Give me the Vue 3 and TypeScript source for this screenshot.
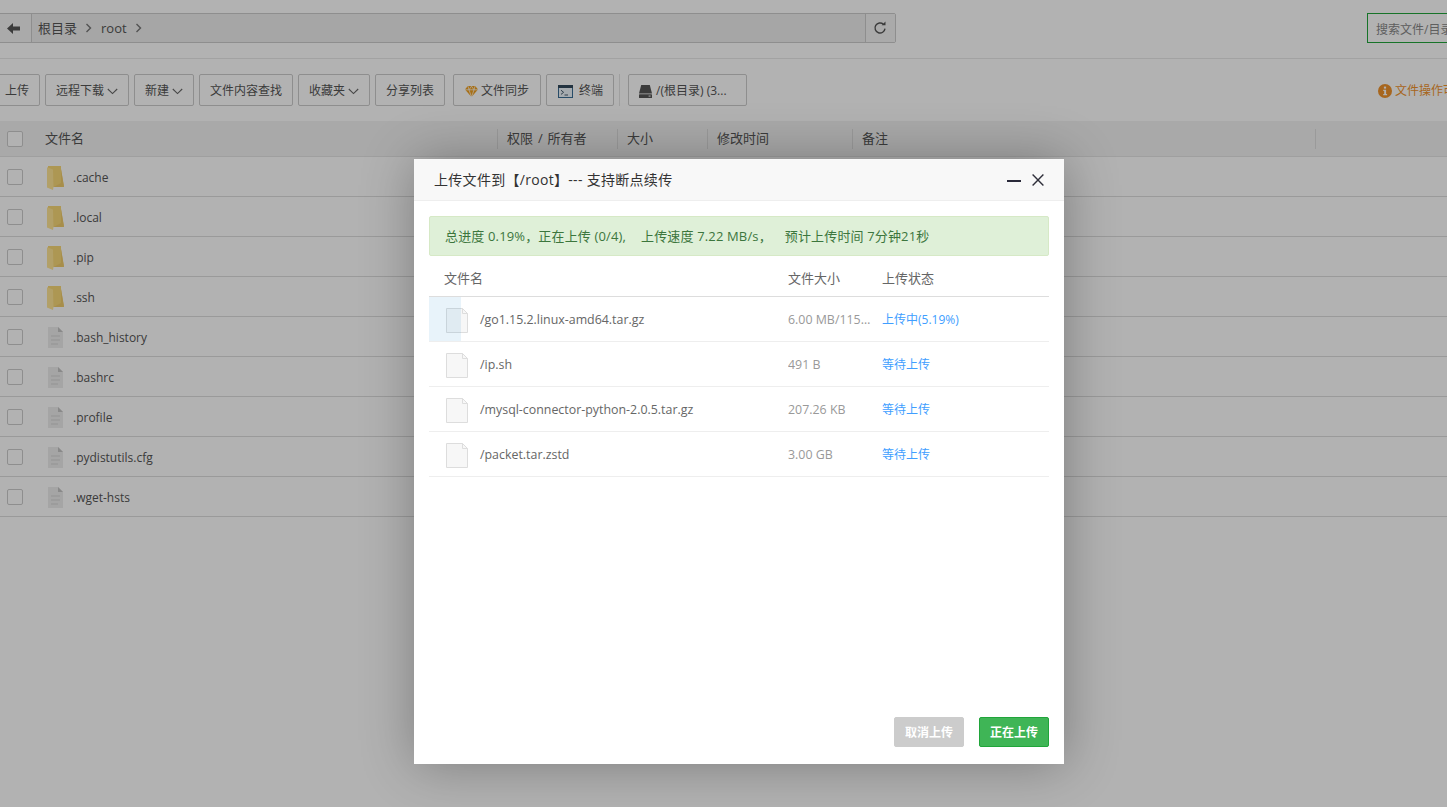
<script setup lang="ts">
interface Entry { name: string; folder: boolean }
interface Upload { name: string; size: string; status: string; progress: number; active: boolean }

const tools = [
  { label: '远程下载', caret: true },
  { label: '新建', caret: true },
  { label: '文件内容查找', caret: false },
  { label: '收藏夹', caret: true },
  { label: '分享列表', caret: false },
]
const columns = [
  { label: '权限 / 所有者', width: 120 },
  { label: '大小', width: 90 },
  { label: '修改时间', width: 145 },
  { label: '备注', width: 464 },
]
const entries: Entry[] = [
  { name: '.cache', folder: true },
  { name: '.local', folder: true },
  { name: '.pip', folder: true },
  { name: '.ssh', folder: true },
  { name: '.bash_history', folder: false },
  { name: '.bashrc', folder: false },
  { name: '.profile', folder: false },
  { name: '.pydistutils.cfg', folder: false },
  { name: '.wget-hsts', folder: false },
]
const uploads: Upload[] = [
  { name: '/go1.15.2.linux-amd64.tar.gz', size: '6.00 MB/115.6 MB', status: '上传中(5.19%)', progress: 5.19, active: true },
  { name: '/ip.sh', size: '491 B', status: '等待上传', progress: 0, active: false },
  { name: '/mysql-connector-python-2.0.5.tar.gz', size: '207.26 KB', status: '等待上传', progress: 0, active: false },
  { name: '/packet.tar.zstd', size: '3.00 GB', status: '等待上传', progress: 0, active: false },
]
</script>

<template>
  <div class="page">
    <div class="top">
      <div class="pathbar">
        <button class="back" aria-label="返回">
          <svg width="13" height="11" viewBox="0 0 13 11"><path d="M0 5.5 6 0v3.5h7v4H6V11z" fill="#555" /></svg>
        </button>
        <div class="crumbs">
          <span>根目录</span>
          <svg class="crumb-arrow" width="7" height="10" viewBox="0 0 7 10"><path d="M1.5 1 5.5 5 1.5 9" fill="none" stroke="#777" stroke-width="1.4" /></svg>
          <span>root</span>
          <svg class="crumb-arrow" width="7" height="10" viewBox="0 0 7 10"><path d="M1.5 1 5.5 5 1.5 9" fill="none" stroke="#777" stroke-width="1.4" /></svg>
        </div>
        <button class="refresh" aria-label="刷新">
          <svg width="14" height="14" viewBox="0 0 14 14"><path d="M12 7.6A5 5 0 1 1 10.4 3.3" fill="none" stroke="#555" stroke-width="1.4" /><path d="M8.6 4.3h3.9V.5z" fill="#555" /></svg>
        </button>
      </div>
      <div class="search">搜索文件/目录</div>
    </div>

    <div class="toolbar">
      <div class="tools">
        <button class="tool first">上传</button>
        <button v-for="t in tools" :key="t.label" class="tool">
          {{ t.label }}
          <svg v-if="t.caret" class="caret" width="11" height="7" viewBox="0 0 11 7"><path d="M.8 1 5.5 5.6 10.2 1" fill="none" stroke="#666" stroke-width="1.1" /></svg>
        </button>
        <button class="tool sync">
          <svg width="13" height="11" viewBox="0 0 13 11"><path d="M2.8 0h7.4L13 3.6 6.5 11 0 3.6z" fill="#f0a020" /><path d="M0 3.8h13M4 3.8 6.5 11 9 3.8M3 .2l1 3.6 2.5-3.6 2.5 3.6 1-3.6" fill="none" stroke="#fff" stroke-width=".7" /></svg>
          文件同步
        </button>
        <button class="tool term">
          <svg width="15" height="13" viewBox="0 0 15 13"><rect x=".5" y=".5" width="14" height="12" fill="#eef5fb" stroke="#3a6d96" /><rect width="15" height="3" fill="#33495c" /><path d="M3 5.2 5.6 7.3 3 9.4M6.5 10h3.5" fill="none" stroke="#33495c" stroke-width=".9" /></svg>
          终端
        </button>
        <span class="tool-sep"></span>
        <button class="tool disk">
          <svg width="13" height="13" viewBox="0 0 13 13"><path d="M2.2 0h8.6L13 8.5H0z" fill="#555" /><rect y="9.2" width="13" height="3.8" rx=".6" fill="#555" /><rect x="9.6" y="10.5" width="2" height="1.2" fill="#ddd" /></svg>
          /(根目录) (3...
        </button>
      </div>
      <div class="notice">
        <svg width="14" height="14" viewBox="0 0 14 14"><circle cx="7" cy="7" r="7" fill="#f0932b" /><rect x="5.9" y="2.6" width="2.2" height="2" fill="#fff" /><path d="M5.2 5.8h2.9v4.3h1v1.2H5.2v-1.2h1V7H5.200z" fill="#fff" /></svg>
        <span>文件操作可</span>
      </div>
    </div>

    <div class="thead">
      <div class="name-col">
        <span class="check"></span>
        <span class="th-name">文件名</span>
      </div>
      <div v-for="c in columns" :key="c.label" class="th" :style="{ width: c.width + 'px' }">{{ c.label }}</div>
    </div>

    <div v-for="e in entries" :key="e.name" class="row">
      <span class="check"></span>
      <svg v-if="e.folder" class="ficon folder" width="17" height="24" viewBox="0 0 17 24">
        <path d="M1 0h13v3l2.900 18H1z" fill="#f8d878" />
        <path d="M0 1.200 6 3.500 6.500 21 6 24 0 21.500z" fill="#ffe595" />
        <path d="M6.500 21h10.400V19.500L14 3v14z" fill="#f0cc6c" />
      </svg>
      <svg v-else class="ficon doc" width="15" height="21" viewBox="0 0 15 21">
        <path d="M0 0h10l5 5v16H0z" fill="#ececec" />
        <path d="M10 0v5h5z" fill="#c4c4c4" />
        <path d="M3 9h9M3 13h9M3 17h7" stroke="#d4d4d4" stroke-width="1" />
      </svg>
      <span class="fname">{{ e.name }}</span>
    </div>

    <div class="mask"></div>

    <section class="dialog">
      <header class="dlg-head">
        <h2>上传文件到【/root】--- 支持断点续传</h2>
        <div class="dlg-ctl">
          <svg width="14" height="14" viewBox="0 0 14 14"><rect y="7" width="14" height="2" fill="#2a2a3a" /></svg>
          <svg width="12" height="12" viewBox="0 0 12 12"><path d="M.6.600 11.400 11.400M11.400.600.600 11.400" stroke="#2f2f3a" stroke-width="1.400" /></svg>
        </div>
      </header>
      <div class="dlg-body">
        <div class="alert">
          <span>总进度 0.19%，正在上传 (0/4),</span>
          <span>上传速度 7.22 MB/s，</span>
          <span class="eta">预计上传时间 7分钟21秒</span>
        </div>
        <div class="up-head">
          <span class="up-first">文件名</span>
          <span>文件大小</span>
          <span>上传状态</span>
        </div>
        <div v-for="u in uploads" :key="u.name" class="up-row">
          <div class="up-bar" :style="{ width: u.progress + '%' }"></div>
          <div class="up-file">
            <svg width="22" height="25" viewBox="0 0 22 25"><path d="M.5.500h16l5 5v19H.5z" fill="#f7f7f7" stroke="#ddd" /><path d="M16.500.500v5h5" fill="none" stroke="#ddd" /></svg>
            <span>{{ u.name }}</span>
          </div>
          <span class="up-size">{{ u.size }}</span>
          <span class="up-status">{{ u.status }}</span>
        </div>
      </div>
      <footer class="dlg-foot">
        <button class="btn cancel">取消上传</button>
        <button class="btn busy">正在上传</button>
      </footer>
    </section>
  </div>
</template>

<style>
html, body { margin: 0; background: #fff; }
</style>

<style scoped>
.page {
  position: relative;
  height: 807px;
  width: 1447px;
  overflow: hidden;
  background: #fff;
  color: #555;
  font: 12px/1.4 "Open Sans", "Noto Sans CJK SC", sans-serif;
}
button { font: inherit; color: inherit; background: #fff; cursor: pointer; }
.top {
  display: flex;
  justify-content: space-between;
  padding: 13px 0 15px;
  height: 30px;
  border-bottom: 1px solid #e8e8e8;
}
.pathbar {
  display: flex;
  width: 897px;
  height: 30px;
  margin-left: -1px;
  box-sizing: border-box;
  border: 1px solid #ccc;
  border-radius: 0 2px 2px 0;
  background: #f4f4f4;
}
.back { width: 32px; padding: 0 5px 0 0; border: 0; border-right: 1px solid #ccc; background: #f4f4f4; display: flex; align-items: center; justify-content: center; }
.crumbs {
  flex: 1;
  display: flex;
  align-items: center;
  gap: 8px;
  padding-left: 6px;
  font-size: 13px;
  background: #eee;
}
.crumb-arrow { margin-right: 1px; }
.refresh { width: 30px; padding: 0 1px 0 0; border: 0; border-left: 1px solid #ccc; background: #f4f4f4; display: flex; align-items: center; justify-content: center; }
.search {
  width: 120px;
  margin-right: -40px;
  height: 30px;
  box-sizing: border-box;
  border: 1px solid #20a53a;
  padding-left: 8px;
  line-height: 31px;
  color: #888;
  white-space: nowrap;
  overflow: hidden;
}
.toolbar {
  display: flex;
  justify-content: space-between;
  align-items: center;
  padding-top: 15px;
  height: 32px;
  margin-bottom: 15px;
}
.tools { display: flex; gap: 5px; align-items: center; }
.tool {
  height: 32px;
  box-sizing: border-box;
  padding: 2px 10px 0;
  border: 1px solid #ccc;
  border-radius: 2px;
  background: #fff;
  display: flex;
  align-items: center;
  white-space: nowrap;
}
.first { margin-left: -30px; width: 70px; justify-content: flex-end; padding-right: 10px; }
.caret { margin-left: 3px; }
.sync { margin-left: 3px; gap: 3px; padding: 2px 11px 0; }
.term { gap: 6px; padding: 2px 10px 0 11px; }
.tool-sep { width: 1px; height: 32px; background: #e4e4e4; margin: 0 3px 0 0; }
.disk { gap: 4px; width: 119px; padding-left: 10px; }
.notice {
  display: flex;
  align-items: center;
  gap: 3px;
  padding-top: 3px;
  color: #f0932b;
  width: 69px;
  flex: none;
  white-space: nowrap;
  overflow: hidden;
}
.notice svg { flex: none; }
.thead {
  display: flex;
  align-items: center;
  height: 36px;
  box-sizing: border-box;
  background: #f2f2f2;
  border-bottom: 1px solid #e4e4e4;
  font-size: 13px;
}
.name-col { display: flex; align-items: center; width: 497px; }
.check {
  flex: none;
  width: 16px;
  height: 16px;
  box-sizing: border-box;
  margin-left: 7px;
  border: 1px solid #ccc;
  border-radius: 2px;
  background: #fff;
}
.th-name { margin-left: 22px; }
.th {
  box-sizing: border-box;
  padding-left: 9px;
  height: 20px;
  line-height: 19px;
  word-spacing: 1.5px;
  border-left: 1px solid #ddd;
}
.th:last-child { border-right: 1px solid #ddd; }
.row {
  display: flex;
  align-items: center;
  height: 40px;
  box-sizing: border-box;
  border-bottom: 1px solid #ddd;
}
.ficon { flex: none; margin-top: 2px; }
.folder { margin-left: 24px; }
.doc { margin-left: 25px; margin-right: 1px; }
.fname { margin-left: 9px; padding-top: 4px; font-size: 12px; }
.mask { position: absolute; inset: 0; background: rgba(0, 0, 0, 0.3); }
.dialog {
  position: absolute;
  left: 414px;
  top: 159px;
  width: 650px;
  height: 605px;
  display: flex;
  flex-direction: column;
  background: #fff;
  box-shadow: 1px 1px 50px rgba(0, 0, 0, 0.3);
}
.dlg-head {
  display: flex;
  align-items: center;
  justify-content: space-between;
  height: 42px;
  box-sizing: border-box;
  padding: 0 20px;
  background: #f8f8f8;
  border-bottom: 1px solid #eee;
  color: #333;
}
.dlg-head h2 { margin: 0; font-size: 14px; font-weight: 400; letter-spacing: 0.3px; }
.dlg-ctl { display: flex; align-items: center; gap: 11px; }
.dlg-body { flex: 1; padding: 15px 15px 0; }
.alert {
  display: flex;
  align-items: center;
  gap: 15px;
  height: 40px;
  box-sizing: border-box;
  padding: 0 15px;
  background: #dff0d8;
  border: 1px solid #d6e9c6;
  border-radius: 2px;
  color: #3c763d;
  font-size: 13px;
  letter-spacing: 0.15px;
}
.alert .eta { margin-left: -2px; }
.up-head {
  display: grid;
  grid-template-columns: 359px 94px 1fr;
  align-items: center;
  height: 41px;
  box-sizing: border-box;
  padding-top: 5px;
  border-bottom: 1px solid #ddd;
  color: #666;
  font-size: 13px;
}
.up-first { padding-left: 15px; }
.up-row {
  position: relative;
  display: grid;
  grid-template-columns: 359px 94px 1fr;
  align-items: center;
  height: 45px;
  box-sizing: border-box;
  padding-top: 2px;
  border-bottom: 1px solid #eee;
}
.up-bar { position: absolute; left: 0; top: 0; bottom: 0; background: rgba(32, 140, 210, 0.1); }
.up-file { display: flex; align-items: center; gap: 12px; padding-left: 17px; color: #666; font-size: 12.4px; }
.up-file svg { flex: none; }
.up-size {
  color: #999;
  padding-right: 10px;
  font-size: 12.4px;
  white-space: nowrap;
  overflow: hidden;
  text-overflow: ellipsis;
}
.up-status { color: #409eff; }
.dlg-foot {
  display: flex;
  justify-content: flex-end;
  gap: 15px;
  padding: 0 15px 17px;
}
.btn {
  width: 70px;
  height: 30px;
  padding: 2px 0 0;
  border-radius: 2px;
  font-size: 12px;
  font-weight: 700;
  color: #fff;
}
.cancel { width: 70px; border: 1px solid #ccc; background: #ccc; }
.busy { border: 1px solid #20a53a; background: #3fb556; }
</style>
